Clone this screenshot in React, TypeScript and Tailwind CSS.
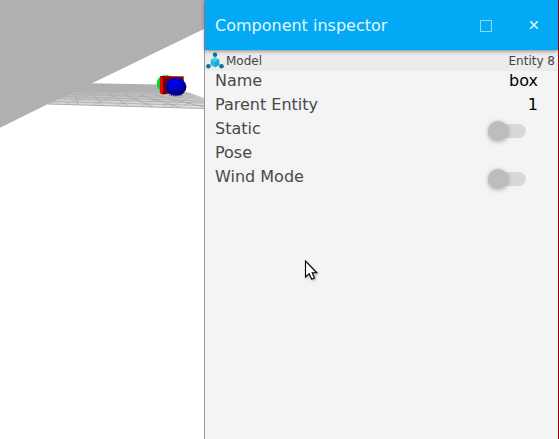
import type { ReactNode } from 'react';

function Scene() {
  return (
    <svg className="block h-[439px] w-[204px] shrink-0 bg-white" viewBox="0 0 204 439">
      <defs>
        <linearGradient id="ground" x1="0" y1="0" x2="0" y2="1">
          <stop offset="0.3" stopColor="#b0b0b0" />
          <stop offset="0.65" stopColor="#cccccc" />
          <stop offset="1" stopColor="#e6e6e6" />
        </linearGradient>
        <radialGradient id="sphere" cx="0.4" cy="0.25" r="0.75">
          <stop offset="0" stopColor="#0000ff" />
          <stop offset="0.5" stopColor="#0000c4" />
          <stop offset="1" stopColor="#000060" />
        </radialGradient>
      </defs>
      <path d="M92 83.2L158 84.6L190 93L204 98V108.5L48 104L60 90Z" fill="url(#ground)" />
      <g stroke="#a4a4a4" strokeWidth="0.9" fill="none">
        <path d="M48 104L204 108.5" />
        <path d="M50 101.5L204 105.5M54 98.5L204 103M60 96.5L204 101" strokeOpacity="0.75" />
        <path d="M72 94.5L196 98" strokeOpacity="0.5" />
        <path d="M75 94L78 104.5M92 93L102 105M108 93L128 106M124 94L153 107M140 95L180 107.5M155 95L204 107" strokeOpacity="0.85" />
        <path d="M66 104L96 93M92 105L118 95M116 105.5L146 95M142 106L164 96M162 107L184 96M170 107L193 96M180 107L200 98" strokeOpacity="0.5" />
      </g>
      <path d="M0 0H204V29L92 83.2L76 91.5L48 104L0 127.7Z" fill="#b0b0b0" />
      <ellipse cx="164.5" cy="83.5" rx="7.8" ry="8" fill="#00d820" />
      <path d="M160 76.3L183.7 76.8V91L163 94.5L160 93Z" fill="#760000" />
      <path d="M160 76.5L163 78V94.5L159.8 93Z" fill="#e40808" />
      <path d="M161 76.7L183.5 77" stroke="#a80000" />
      <path d="M163 75.6H170" stroke="#20d030" strokeDasharray="2 1" />
      <ellipse cx="176" cy="86.8" rx="10.5" ry="9" fill="url(#sphere)" />
      <path d="M169 95Q176 97 183 95" stroke="#2020e0" strokeDasharray="1 1" fill="none" />
    </svg>
  );
}

function ModelIcon() {
  return (
    <svg className="h-[18px] w-[18px] shrink-0" viewBox="0 0 18 18">
      <path d="M9 3V9L3 14M9 9L15 14" stroke="#a5dcec" strokeWidth="1.2" fill="none" />
      <circle cx="9" cy="2.8" r="2.2" fill="#1c6d9b" />
      <circle cx="2.4" cy="14.3" r="2.3" fill="#1c6d9b" />
      <circle cx="15.5" cy="14.3" r="2.3" fill="#1c6d9b" />
      <path d="M9 5.5L13.2 7.6V13L9 15.2L4.8 13V7.6Z" fill="#22bce2" />
      <path d="M9 5.5L13.2 7.6L9 9.8L4.8 7.6Z" fill="#4bd3ee" />
      <path d="M9 9.8L13.2 7.6V13L9 15.2Z" fill="#16add7" />
    </svg>
  );
}

function Switch() {
  return (
    <span className="mr-3 mt-[3px] flex h-[14px] w-[38px] items-center rounded-full bg-[#d8d8d8]">
      <span className="h-5 w-5 shrink-0 rounded-full bg-[#bdbdbd] shadow-[0_1px_5px_rgba(0,0,0,0.3)]" />
    </span>
  );
}

function Row({ label, children }: { label: string; children?: ReactNode }) {
  return (
    <div className="flex h-6 items-center justify-between pl-2.5 pr-5">
      <span className="text-[#494949]">{label}</span>
      <span className="text-black">{children}</span>
    </div>
  );
}

export default function App() {
  return (
    <div className="relative flex h-[439px] w-[559px] overflow-hidden bg-white font-['DejaVu_Sans',sans-serif] text-base">
      <Scene />
      <main className="flex w-[355px] flex-col border-l border-r border-l-[#999999] border-r-[#9c0010] bg-[#f4f4f4]">
        <header className="z-10 flex h-[50px] shrink-0 items-center bg-[#03a9f4] pl-2.5 pt-0.5 text-[#e3f6ff] shadow-[0_1px_4px_rgba(0,0,0,0.45)]">
          <h1 className="flex-1 whitespace-nowrap">Component inspector</h1>
          <svg className="mr-[38px] h-3 w-3" viewBox="0 0 12 12" fill="none">
            <rect x="0.5" y="0.5" width="11" height="11" stroke="#8edaf9" />
          </svg>
          <svg className="mb-[3px] mr-5 h-2 w-2 overflow-visible" viewBox="0 0 8 8">
            <path d="M0.3 0.3L7.7 7.7M7.7 0.3L0.3 7.7" stroke="#e8f8ff" strokeWidth="1.6" />
          </svg>
        </header>
        <div className="flex h-[21px] shrink-0 items-center justify-between bg-[#ececec] pl-px pr-[3px] text-xs text-[#444444]">
          <div className="flex items-center gap-0.5">
            <ModelIcon />
            <span>Model</span>
          </div>
          <span>Entity 8</span>
        </div>
        <section className="-mt-0.5">
          <Row label="Name">box</Row>
          <Row label="Parent Entity">1</Row>
          <Row label="Static"><Switch /></Row>
          <Row label="Pose" />
          <Row label="Wind Mode"><Switch /></Row>
        </section>
      </main>
      <svg className="absolute left-[304px] top-[260px] h-[22px] w-[15px] overflow-visible drop-shadow-[1px_1px_1px_rgba(0,0,0,0.3)]" viewBox="0 0 15 22">
        <path d="M1.5 1.2V17L5.2 13.7L7.7 19.2L10.5 18L8.2 12.8H12.8Z" fill="white" stroke="black" strokeWidth="1.1" />
      </svg>
    </div>
  );
}
